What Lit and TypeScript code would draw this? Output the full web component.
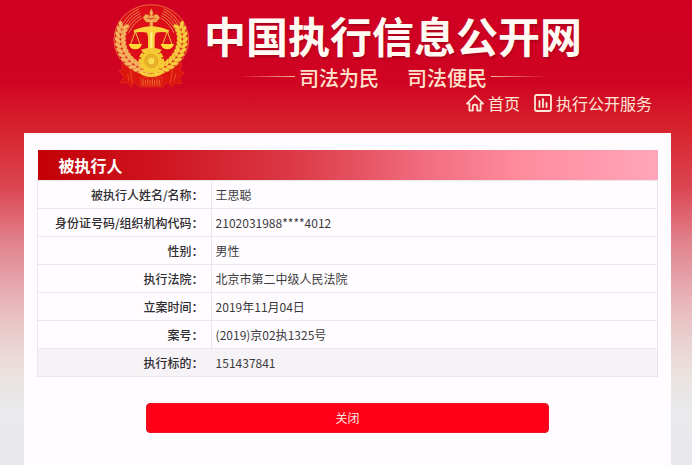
import { LitElement, html, svg, css } from "lit";
import { customElement } from "lit/decorators.js";

const GOLD = "#f6c53c";

/** Court emblem: scales on a column, gear below, wheat ears around. */
@customElement("court-emblem")
class CourtEmblem extends LitElement {
  static styles = css`
    :host {
      display: block;
      flex: none;
    }
    .emblem {
      display: block;
      width: 78px;
      height: 85px;
    }
  `;

  private ear(side: number) {
    const grains = [];
    for (let i = 0; i < 13; i++) {
      const deg = 97 + i * 9;
      const a = (deg * Math.PI) / 180;
      for (const r of [85, 101]) {
        const x = r * Math.cos(a);
        const y = r * Math.sin(a);
        grains.push(svg`<ellipse cx=${x} cy=${y} rx="12" ry="6"
          transform="rotate(${deg + (r === 85 ? 125 : 55)} ${x} ${y})"/>`);
      }
    }
    return svg`<g transform="translate(155 118) scale(${side} 1)"
      fill=${side === 1 ? "#f6b462" : "#f9cc3e"} stroke="#d8641f" stroke-width="0.8">${grains}</g>`;
  }

  private rays(side: number) {
    return svg`<g transform="translate(155 118) scale(${side} 1)" fill="none"
      stroke="#e8834a" stroke-width="3">
      ${[62, 69, 76, 83, 90].map(
        (r) => svg`<path d="M${-r - 6} ${-r * 0.3} Q${-r * 0.85} ${-r * 0.8} ${-28 - (r - 62) * 0.35} ${-r - 1}"/>`
      )}</g>`;
  }

  render() {
    const teeth = Array.from({ length: 12 }, (_, i) => i * 30);
    return html`<svg class="emblem" viewBox="40 10 234 255" aria-hidden="true">
      <path d="M66 192 L96 206 Q155 246 214 206 L246 190 L242 214 L254 219 L240 234 L246 252 L226 250 L218 262 L202 248 L190 262 L120 262 L106 248 L94 262 L84 250 L62 250 L72 232 L58 214 L68 210 Z"
        fill="#dc160f" stroke="#e2301c" stroke-width="2"/>
      <path d="M92 212 L98 250 M84 222 L88 244 M218 212 L212 250 M228 222 L223 244" stroke="#e9552a" stroke-width="2.5"/>
      <ellipse cx="155" cy="120" rx="112" ry="105" fill="#dc0d18" stroke="#ef7b3f" stroke-width="2.5"/>
      ${this.rays(1)} ${this.rays(-1)} ${this.ear(1)} ${this.ear(-1)}
      <path d="M122 234 H188 L184 258 H126 Z" fill="#dc160f" stroke="#e9602a" stroke-width="1.5"/>
      <path d="M130 238 V255 M137 242 V255 M144 238 V255 M151 241 V255 M158 238 V255 M165 241 V255 M172 238 V255 M179 240 V255" stroke="#ee8a38" stroke-width="2.5"/>
      <path d="M155 26 L161 40 L158 48 L172 43 L181 54 L170 68 H160 V82 H150 V68 H140 L129 54 L138 43 L152 48 L149 40 Z" fill="#f4ae55" stroke="#d8441d" stroke-width="1.5"/>
      <path d="M140 57 H170 M146 50 L155 60 L164 50" fill="none" stroke="#d7301d" stroke-width="2"/>
      <path d="M102 92 Q130 80 155 80 Q180 80 208 92 L206 99 Q184 95 168 99 L165 112 V160 H145 V112 L142 99 Q126 95 104 99 Z" fill="#fbd23c"/>
      <path d="M152 98 H158 V160 H152 Z" fill="#fff08a"/>
      <path d="M107 96 L92 136 M107 96 L122 136 M203 96 L188 136 M203 96 L218 136" stroke=${GOLD} stroke-width="3"/>
      <path d="M87 133 H127 Q123 149 107 149 Q91 149 87 133 Z M183 133 H223 Q219 149 203 149 Q187 149 183 133 Z" fill="#ffdb35"/>
      <path d="M124 150 Q155 138 186 150 L180 160 H130 Z" fill="#f8bf3d"/>
      ${teeth.map(
        (t) => svg`<path d="M148 146 H162 V156 H148 Z" fill="#f5ca32" transform="rotate(${t} 155 184)"/>`
      )}
      <circle cx="155" cy="184" r="31" fill="#f5ca32"/>
      <circle cx="155" cy="184" r="20" fill="#eeb52b" stroke="#d3951d" stroke-width="2"/>
      <circle cx="155" cy="184" r="12" fill="#f8dc4d" stroke="#cc8d1b" stroke-width="2"/>
      <path d="M118 212 Q155 236 192 212 L184 226 Q155 238 126 226 Z" fill="#f7cf38"/>
    </svg>`;
  }
}

@customElement("app-root")
class AppRoot extends LitElement {
  static styles = css`
    :host {
      display: flex;
      flex-direction: column;
      min-height: 100vh;
      box-sizing: border-box;
      padding: 3px 21px 0 24px;
      font-family: "Noto Sans CJK SC", sans-serif;
      font-size: 12px;
      color: #3c3a3d;
      background: linear-gradient(
        #d00023 0,
        #cf0322 80px,
        #d7232d 130px,
        #da4450 185px,
        #e1808a 240px,
        #e8b4b9 300px,
        #ead4d3 345px,
        #eae2df 375px,
        #eae9ec 410px,
        #eae8ed 100%
      );
    }
    .brand {
      display: flex;
      justify-content: center;
      gap: 13px;
    }
    .titles {
      display: flex;
      flex-direction: column;
      align-items: center;
      gap: 9px;
      padding-top: 8px;
    }
    .title {
      margin: 0;
      font-size: 42px;
      line-height: 48px;
      font-weight: 700;
      color: #fffaf2;
      text-shadow: 1px 2px 2px #8c001680;
      white-space: nowrap;
    }
    .motto {
      display: flex;
      align-items: flex-start;
      gap: 4px;
      margin: 0;
      font-size: 20px;
      line-height: 20px;
      font-weight: 500;
      color: #ffe3cd;
      white-space: nowrap;
    }
    .words {
      display: flex;
      gap: 28px;
    }
    .rule {
      width: 56px;
      height: 1px;
      margin-top: 8px;
      background: linear-gradient(to right, #f0a08000, #f5b596);
    }
    .rule.end {
      background: linear-gradient(to left, #f0a08000, #f5b596);
    }
    .nav {
      display: flex;
      justify-content: flex-end;
      gap: 14px;
      padding: 3px 19px 18px 0;
    }
    .link {
      display: flex;
      align-items: center;
      gap: 4px;
      font-size: 16px;
      line-height: 24px;
      color: #ffe6d6;
      text-decoration: none;
    }
    .icon {
      width: 18px;
      height: 18px;
      fill: none;
      stroke: currentColor;
      stroke-width: 1.8;
      stroke-linejoin: round;
      stroke-linecap: round;
    }
    .card {
      flex: 1;
      display: flex;
      flex-direction: column;
      align-items: center;
      padding: 17px 13px 32px;
      background: #fefcfe;
    }
    .record {
      width: 100%;
      border-collapse: collapse;
    }
    .caption {
      box-sizing: border-box;
      padding: 0 0 0 21px;
      font-size: 16px;
      line-height: 30px;
      font-weight: 700;
      text-align: left;
      color: #fff;
      background: linear-gradient(
        to right,
        #c30006,
        #cf1520 20%,
        #dc3b48 42%,
        #f06c7e 62%,
        #ff8c9d 78%,
        #ffa6ba
      );
    }
    .row {
      border: 1px solid #ebe4ea;
    }
    .row:last-child {
      background: #f6f3f6;
    }
    .name,
    .value {
      height: 27px;
      padding: 0 4px;
      line-height: 18px;
      text-align: left;
      font-weight: 400;
    }
    .name {
      width: 28%;
      box-sizing: border-box;
      padding-right: 7px;
      text-align: right;
      font-weight: 500;
      color: #2f2c30;
      border-right: 1px solid #ebe4ea;
      white-space: nowrap;
    }
    .row:last-child .name {
      border-right-color: #f6f3f6;
    }
    .close {
      width: 65%;
      height: 30px;
      margin-top: 26px;
      padding: 0 0 2px;
      border: 1px solid #ee1226;
      border-radius: 4px;
      font: inherit;
      color: #ffe9e4;
      background: #ff0019;
    }
  `;

  private rows = [
    ["被执行人姓名/名称：", "王思聪"],
    ["身份证号码/组织机构代码：", "2102031988****4012"],
    ["性别：", "男性"],
    ["执行法院：", "北京市第二中级人民法院"],
    ["立案时间：", "2019年11月04日"],
    ["案号：", "(2019)京02执1325号"],
    ["执行标的：", "151437841"],
  ];

  render() {
    return html`
      <header class="brand">
        <court-emblem></court-emblem>
        <div class="titles">
          <h1 class="title">中国执行信息公开网</h1>
          <p class="motto">
            <span class="rule"></span>
            <span class="words"><span>司法为民</span><span>司法便民</span></span>
            <span class="rule end"></span>
          </p>
        </div>
      </header>
      <nav class="nav">
        <a class="link" href="#home">
          <svg class="icon" viewBox="0 0 18 18" aria-hidden="true">
            <path d="M1 9.6 L9 1.6 L17 9.6 H14.6 V16.6 H11.2 V12 Q11.2 10.6 9 10.6 Q6.8 10.6 6.8 12 V16.6 H3.4 V9.6 Z" />
          </svg>
          首页
        </a>
        <a class="link" href="#services">
          <svg class="icon" viewBox="0 0 18 18" aria-hidden="true">
            <rect x="1" y="1" width="16" height="16" rx="1.5" />
            <path d="M5.5 7 V13 M9 5 V13 M12.5 9 V13" />
          </svg>
          执行公开服务
        </a>
      </nav>
      <main class="card">
        <table class="record">
          <thead>
            <tr><th class="caption" colspan="2">被执行人</th></tr>
          </thead>
          <tbody>
            ${this.rows.map(
              ([name, value]) => html`<tr class="row">
                <th class="name" scope="row">${name}</th>
                <td class="value">${value}</td>
              </tr>`
            )}
          </tbody>
        </table>
        <button class="close" type="button">关闭</button>
      </main>
    `;
  }
}
